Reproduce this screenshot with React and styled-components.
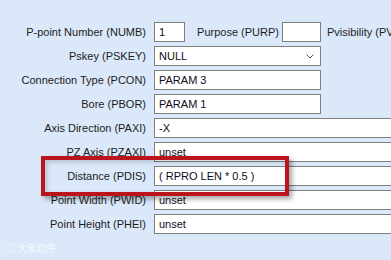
import React from 'react'
import styled, { createGlobalStyle } from 'styled-components'

const GlobalStyle = createGlobalStyle`
  html, body {
    margin: 0;
    padding: 0;
    background: #dbe8f9;
    overflow: hidden;
  }
  body {
    font-family: "Liberation Sans", Arial, sans-serif;
  }
`

const Page = styled.div`
  position: relative;
  width: 391px;
  height: 260px;
  overflow: hidden;
  background: #dbe8f9;
`

const Form = styled.div`
  display: flex;
  flex-direction: column;
  gap: 4px;
  padding-top: 22px;
`

const Row = styled.div`
  display: flex;
  align-items: center;
  height: 20px;
`

const Label = styled.label`
  flex: 0 0 ${p => p.$width || 146}px;
  margin-right: ${p => p.$gap ?? 8}px;
  margin-left: ${p => p.$lead || 0}px;
  text-align: ${p => (p.$left ? 'left' : 'right')};
  font-size: 11px;
  color: #1c1c1c;
  white-space: nowrap;
`

const Field = styled.div`
  box-sizing: border-box;
  flex: 0 0 ${p => p.$width}px;
  height: 20px;
  display: flex;
  align-items: center;
  justify-content: space-between;
  padding: 0 4px;
  background: #fff;
  border: 1px solid #7f7f7f;
  font-size: 11px;
  color: #0d0d1a;
  white-space: nowrap;
`

const Chevron = styled.svg`
  width: 8px;
  height: 5px;
  margin-right: 2px;
`

const Highlight = styled.div`
  position: absolute;
  left: 41px;
  top: 156px;
  width: 248px;
  height: 40px;
  box-sizing: border-box;
  border: 4px solid #bb141d;
  box-shadow: 3px 3px 5px rgba(0, 0, 0, 0.35), inset 2px 2px 5px rgba(0, 0, 0, 0.18);
  pointer-events: none;
`

const Watermark = styled.div`
  position: absolute;
  left: 6px;
  top: 240px;
  font-size: 10px;
  color: rgba(255, 255, 255, 0.75);
  font-family: "Noto Sans CJK SC", sans-serif;
  letter-spacing: -0.5px;
`

const rows = [
  { label: 'Connection Type (PCON)', value: 'PARAM 3', width: 167 },
  { label: 'Bore (PBOR)', value: 'PARAM 1', width: 167 },
  { label: 'Axis Direction (PAXI)', value: '-X', width: 260 },
  { label: 'PZ Axis (PZAXI)', value: 'unset', width: 260 },
  { label: 'Distance (PDIS)', value: '( RPRO LEN * 0.5 )', width: 260 },
  { label: 'Point Width (PWID)', value: 'unset', width: 260 },
  { label: 'Point Height (PHEI)', value: 'unset', width: 260 },
]

const App = () => {
  return (
    <Page>
      <GlobalStyle />
      <Form>
        <Row>
          <Label>P-point Number (NUMB)</Label>
          <Field $width={31}>1</Field>
          <Label $width={94} $gap={3}>Purpose (PURP)</Label>
          <Field $width={39} />
          <Label $width={64} $left $gap={0} $lead={6}>
            Pvisibility (PVIS)
          </Label>
        </Row>
        <Row>
          <Label>Pskey (PSKEY)</Label>
          <Field $width={167}>
            NULL
            <Chevron viewBox="0 0 8 5">
              <path d="M0.5 0.5 L4 4 L7.5 0.5" fill="none" stroke="#555" strokeWidth="1" />
            </Chevron>
          </Field>
        </Row>
        {rows.map(r => (
          <Row key={r.label}>
            <Label>{r.label}</Label>
            <Field $width={r.width}>{r.value}</Field>
          </Row>
        ))}
      </Form>
      <Highlight />
      <Watermark>◎ 大象软件</Watermark>
    </Page>
  )
}

export default App
